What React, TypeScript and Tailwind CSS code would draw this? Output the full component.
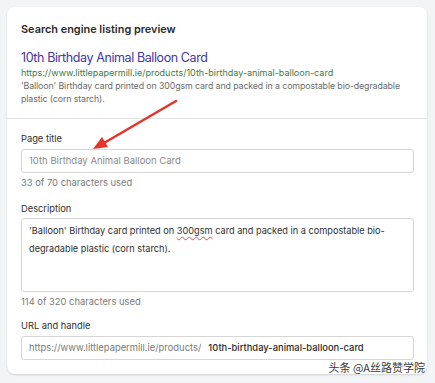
import React from "react";

export default function App() {
  return (
    <div className="relative w-[435px] h-[383px] bg-[#f3f4f6] pt-[7px] pl-[7px]" style={{ fontFamily: "Inter, 'Noto Sans', sans-serif" }}>
      <div className="w-[420px] h-[367px] bg-white rounded-[8px] shadow-[0_1px_2px_rgba(0,0,0,0.15)] flex flex-col">
        <div className="pl-[14px] pr-[13px] pt-[14px] pb-[13px] border-b border-[#e3e3e3]">
          <div className="text-[10.9px] leading-[16px] font-semibold text-[#2b2b2b]">Search engine listing preview</div>
          <div className="mt-[12px] text-[12.5px] leading-[18px] tracking-[-0.4px] text-[#4337a6]">10th Birthday Animal Balloon Card</div>
          <div className="text-[9px] leading-[12px] text-[#3b7d45]">https://www.littlepapermill.ie/products/10th-birthday-animal-balloon-card</div>
          <div className="text-[8.8px] leading-[13px] tracking-[-0.1px] text-[#6b6b6b]">'Balloon' Birthday card printed on 300gsm card and packed in a compostable bio-degradable plastic (corn starch).</div>
        </div>
        <div className="pl-[14px] pr-[13px] pt-[13px] flex flex-col">
          <div className="text-[9.3px] leading-[14px] text-[#303030]">Page title</div>
          <div className="mt-[3px] h-[24px] border border-[#d6d6d6] rounded-[3px] flex items-center px-[7px] text-[9.5px] text-[#8a8a8a]">10th Birthday Animal Balloon Card</div>
          <div className="mt-[3px] text-[9.4px] leading-[14px] text-[#7a7a7a]">33 of 70 characters used</div>
          <div className="mt-[12px] text-[9.3px] leading-[14px] text-[#303030]">Description</div>
          <div className="mt-[2px] h-[74px] border border-[#d6d6d6] rounded-[3px] px-[7px] pt-[3px] text-[9.2px] leading-[18px] text-[#2f2f2f]">
            'Balloon' Birthday card printed on <span className="underline decoration-wavy decoration-[#e05050] decoration-1 underline-offset-2">300gsm</span> card and packed in a compostable bio-degradable plastic (corn starch).
          </div>
          <div className="mt-[3px] text-[9.4px] leading-[14px] text-[#7a7a7a]">114 of 320 characters used</div>
          <div className="mt-[10px] text-[9.3px] leading-[14px] text-[#303030]">URL and handle</div>
          <div className="mt-[3px] h-[24px] border border-[#d6d6d6] rounded-[3px] flex items-center px-[7px] text-[9.4px] whitespace-nowrap">
            <span className="text-[#7a7a7a]">https://www.littlepapermill.ie/products/</span>
            <span className="ml-[7px] text-[#2b2b2b] font-medium">10th-birthday-animal-balloon-card</span>
          </div>
        </div>
      </div>
      <svg className="absolute left-0 top-0 pointer-events-none" width="435" height="383">
        <line x1="176" y1="101" x2="104" y2="143" stroke="#e8322a" strokeWidth="2.5" strokeLinecap="round" />
        <polygon points="93,149 102,137 108,147" fill="#e8322a" />
      </svg>
      <div className="absolute right-[10px] top-[360px] text-[11px] leading-[15px] text-[#3a3a3a] [text-shadow:0_0_2px_#fff,0_0_2px_#fff,0_0_1px_#fff]" style={{ fontFamily: "'Noto Sans CJK SC', sans-serif" }}>头条 @A丝路赞学院</div>
    </div>
  );
}
